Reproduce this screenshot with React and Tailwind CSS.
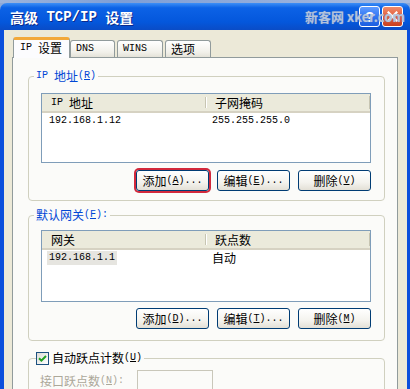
import React from "react";

const CJK = /([\u2e80-\u9fff\uff00-\uffef]+)/;

// SimSun look: CJK at 12px, latin half-width at 6px
const T = ({ s }) =>
  s
    .split(CJK)
    .filter(Boolean)
    .map((p, i) =>
      CJK.test(p) ? (
        <span key={i} className="font-['Noto_Sans_CJK_SC'] text-[12px] leading-[14px]">
          {p}
        </span>
      ) : (
        <span key={i} className="font-['Liberation_Mono'] text-[10px] leading-[14px] whitespace-pre">
          {p}
        </span>
      )
    );

const Mn = ({ k, after = "" }) => (
  <span className="font-['Liberation_Mono'] text-[10px] leading-[14px] whitespace-pre">
    (<span className="underline">{k}</span>){after}
  </span>
);

const Button = ({ label, k, dots, hot }) => (
  <button
    className={`flex h-[21px] w-[73px] items-center justify-center rounded-[3px] border border-[#003c74] bg-[linear-gradient(to_bottom,#ffffff,#f4f3ee_60%,#e3e0d6)] text-black ${
      hot ? "shadow-[0_0_0_2px_#d2293c]" : ""
    }`}
  >
    <T s={label} />
    <Mn k={k} after={dots ? "..." : ""} />
  </button>
);

const ListView = ({ cols, rows, h, selected }) => (
  <div className={`${h} border border-[#7f9db9] bg-white`}>
    <div className="flex h-[19px] items-stretch border-b-[2px] border-[#d6d2c2] bg-[#ebeadb]">
      <div className="flex w-[163px] items-center pl-[9px]">
        <T s={cols[0]} />
      </div>
      <div className="my-[3px] w-px bg-[#c7c5b2]" />
      <div className="my-[3px] w-px bg-white" />
      <div className="flex flex-1 items-center pl-[8px]">
        <T s={cols[1]} />
      </div>
      <div className="my-[2px] w-px bg-[#c7c5b2]" />
    </div>
    {rows.map((r, i) => (
      <div key={i} className="flex h-[16px] items-center">
        <div className="flex w-[165px] items-center pl-[5px]">
          <span className={`flex h-[14px] items-center px-[2px] ${selected ? "bg-[#e6e5e0]" : ""}`}>
            <T s={r[0]} />
          </span>
        </div>
        <div className="flex items-center pl-[5px]">
          <T s={r[1]} />
        </div>
      </div>
    ))}
  </div>
);

const Tab = ({ label, w, active }) =>
  active ? (
    <div
      className={`${w} relative z-10 -mb-px flex h-[21px] items-center rounded-t-[3px] border-x border-t-[3px] border-x-[#919b9c] border-t-[#f2a83a] bg-[#fcfcfe] pb-[2px] pl-[6px]`}
    >
      <T s={label} />
    </div>
  ) : (
    <div
      className={`${w} flex h-[17px] items-center rounded-t-[3px] border-x border-t border-[#919b9c] bg-[linear-gradient(to_bottom,#ffffff,#f1f0ea_70%,#e4e2d8)] pl-[5px]`}
    >
      <T s={label} />
    </div>
  );

export default function App() {
  return (
    <div className="relative h-[389px] w-[410px] overflow-hidden bg-[#8ea9d8] text-black">
      <div className="h-[3px] bg-[linear-gradient(to_right,#9db4dc,#7e9ed6_30%,#a8bce0)]" />
      {/* title bar */}
      <div className="relative flex h-[27px] items-center rounded-t-[7px] bg-[linear-gradient(to_bottom,#3d8ff7,#0c62e6_18%,#0457dc_70%,#0a4cc6)] pl-[10px] text-white [text-shadow:1px_1px_#0b2a8c]">
        <span className="font-['Noto_Sans_CJK_SC'] text-[14px] font-bold leading-[18px]">高级</span>
        <span className="whitespace-pre font-['Liberation_Mono'] text-[14px] font-bold leading-[18px]"> TCP/IP </span>
        <span className="font-['Noto_Sans_CJK_SC'] text-[14px] font-bold leading-[18px]">设置</span>
        <div className="ml-auto mr-[7px] flex gap-[2px]">
          <div className="flex h-[21px] w-[21px] items-center justify-center rounded-[3px] border border-white bg-[linear-gradient(to_bottom,#5d9bff,#2a6ff0_60%,#1d5fe0)] font-['Liberation_Sans'] text-[15px] font-bold leading-none [text-shadow:none]">
            ?
          </div>
          <div className="flex h-[21px] w-[21px] items-center justify-center rounded-[3px] border border-white bg-[linear-gradient(to_bottom,#ef8a6a,#e05a38_55%,#c8401f)] [text-shadow:none]">
            <svg width="11" height="11" viewBox="0 0 11 11">
              <path d="M1.5 1.5 L9.5 9.5 M9.5 1.5 L1.5 9.5" stroke="white" strokeWidth="2.2" strokeLinecap="square" />
            </svg>
          </div>
        </div>
        <div className="absolute left-[305px] top-[5px] whitespace-pre font-['Noto_Sans_CJK_SC'] text-[13px] font-bold leading-[17px] text-[#c9d5e8]/75 [text-shadow:0_0_1px_#7f93b8]">
          新客网 xker.com
        </div>
      </div>

      {/* body with frame */}
      <div className="h-[400px] border-l-[4px] border-r-[3px] border-[#0b4fdc] bg-[#ece9d8]">
        <div className="flex h-[27px] items-end gap-[2px] pl-[9px]">
          <Tab label="IP 设置" w="w-[57px]" active />
          <div className="-ml-[2px]">
            <Tab label="DNS" w="w-[45px]" />
          </div>
          <Tab label="WINS" w="w-[46px]" />
          <Tab label="选项" w="w-[46px]" />
        </div>

        <div className="ml-[8px] mr-[9px] h-[360px] border border-[#919b9c] bg-[#fbfbf9] pl-[15px] pr-[12px] pt-[11px]">
          {/* IP addresses */}
          <fieldset className="rounded-[4px] border border-[#d0d0bf] p-0">
            <legend className="ml-[5px] flex h-[14px] items-center px-[2px] text-[#0046d5]">
              <T s="IP 地址" />
              <Mn k="R" />
            </legend>
            <div className="pl-[12px] pr-[13px] pt-[10px] pb-[9px]">
              <ListView cols={["IP 地址", "子网掩码"]} rows={[["192.168.1.12", "255.255.255.0"]]} h="h-[70px]" />
              <div className="mt-[7px] flex justify-end gap-[8px]">
                <Button label="添加" k="A" dots hot />
                <Button label="编辑" k="E" dots />
                <Button label="删除" k="V" />
              </div>
            </div>
          </fieldset>

          {/* gateways */}
          <fieldset className="mt-[7px] rounded-[4px] border border-[#d0d0bf] p-0">
            <legend className="ml-[5px] flex h-[14px] items-center px-[2px] text-[#0046d5]">
              <T s="默认网关" />
              <Mn k="F" after=":" />
            </legend>
            <div className="pl-[12px] pr-[13px] pt-[8px] pb-[11px]">
              <ListView cols={["网关", "跃点数"]} rows={[["192.168.1.1", "自动"]]} h="h-[72px]" selected />
              <div className="mt-[6px] flex justify-end gap-[8px]">
                <Button label="添加" k="D" dots />
                <Button label="编辑" k="T" dots />
                <Button label="删除" k="M" />
              </div>
            </div>
          </fieldset>

          {/* metric */}
          <fieldset className="mt-[10px] rounded-[4px] border border-[#d0d0bf] p-0">
            <legend className="ml-[7px] flex h-[14px] items-center gap-[3px] pr-[2px] text-black">
              <span className="flex h-[13px] w-[13px] items-center justify-center border border-[#1c5180] bg-[linear-gradient(to_bottom_right,#dcdcd7,#ffffff)]">
                <svg width="9" height="9" viewBox="0 0 9 9">
                  <path d="M1 4.2 L3.4 6.6 L8 2" fill="none" stroke="#21a121" strokeWidth="2" />
                </svg>
              </span>
              <span className="flex items-center">
                <T s="自动跃点计数" />
                <Mn k="U" />
              </span>
            </legend>
            <div className="flex h-[60px] items-start pl-[11px] pt-[5px] text-[#aca899]">
              <div className="mt-[4px] flex h-[14px] w-[97px] items-center">
                <T s="接口跃点数" />
                <Mn k="N" after=":" />
              </div>
              <div className="h-[22px] w-[76px] border border-[#c9c7ba] bg-[#fbfbf9]" />
            </div>
          </fieldset>
        </div>
      </div>
    </div>
  );
}
